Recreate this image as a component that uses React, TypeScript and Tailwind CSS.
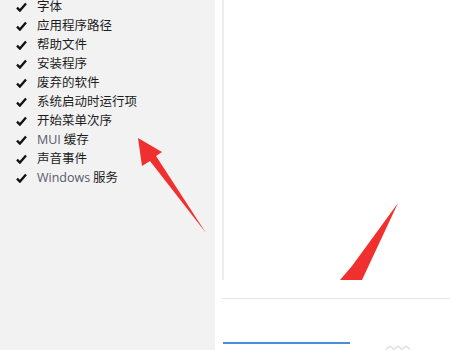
const items: { zh: string; latin?: string }[] = [
  { zh: "字体" },
  { zh: "应用程序路径" },
  { zh: "帮助文件" },
  { zh: "安装程序" },
  { zh: "废弃的软件" },
  { zh: "系统启动时运行项" },
  { zh: "开始菜单次序" },
  { latin: "MUI", zh: " 缓存" },
  { zh: "声音事件" },
  { latin: "Windows", zh: " 服务" },
];

function Check() {
  return (
    <svg width="11" height="10" viewBox="0 0 11 10" className="shrink-0">
      <path d="M1 5.6 L3.9 8.6 L10 1.4" fill="none" stroke="#111" strokeWidth="2.3" strokeLinejoin="miter" />
    </svg>
  );
}

export default function App() {
  return (
    <div
      className="relative flex w-[450px] h-[350px] overflow-hidden bg-white"
      style={{ fontFamily: '"Noto Sans CJK SC", "Noto Sans", sans-serif' }}
    >
      <aside className="w-[215px] shrink-0 bg-[#f2f2f2]">
        <ul className="-mt-[3px] pl-[16px]">
          {items.map((it, i) => (
            <li key={i} className="flex h-[19px] items-center gap-[10px] text-[12.5px] text-[#1c1c1c]">
              <Check />
              <span className="leading-none">
                {it.latin && <span className="text-[#5a5a6a]" style={{ fontFamily: '"Open Sans", sans-serif' }}>{it.latin}</span>}
                {it.zh}
              </span>
            </li>
          ))}
        </ul>
      </aside>

      <main className="flex flex-1 flex-col pl-[7px]">
        <div className="h-[280px] shrink-0 border-l-2 border-[#ececec]" />
        <div className="mt-[18px] shrink-0 border-t border-[#e4e4e4]" />
        <div className="mt-[43px] flex shrink-0 items-start">
          <div className="ml-[1px] h-[2px] w-[127px] bg-[#4a8fdc]" />
          <svg width="30" height="10" viewBox="0 0 30 10" className="ml-[34px] -mt-[1px]">
            <path d="M2 9 Q6 2 10 9 Q14 2 18 9 Q22 2 26 9" fill="none" stroke="#e2e2e2" strokeWidth="1.5" />
          </svg>
        </div>
      </main>

      {/* red arrows drawn over the screenshot */}
      <svg className="pointer-events-none absolute left-0 top-0" width="450" height="350" viewBox="0 0 450 350">
        <polygon points="138,138 162,152 156,156 206,233 150,161 142,166" fill="#f0302e" />
        <polygon points="398,203 362,280 340,280 352,266" fill="#f0302e" />
      </svg>
    </div>
  );
}
